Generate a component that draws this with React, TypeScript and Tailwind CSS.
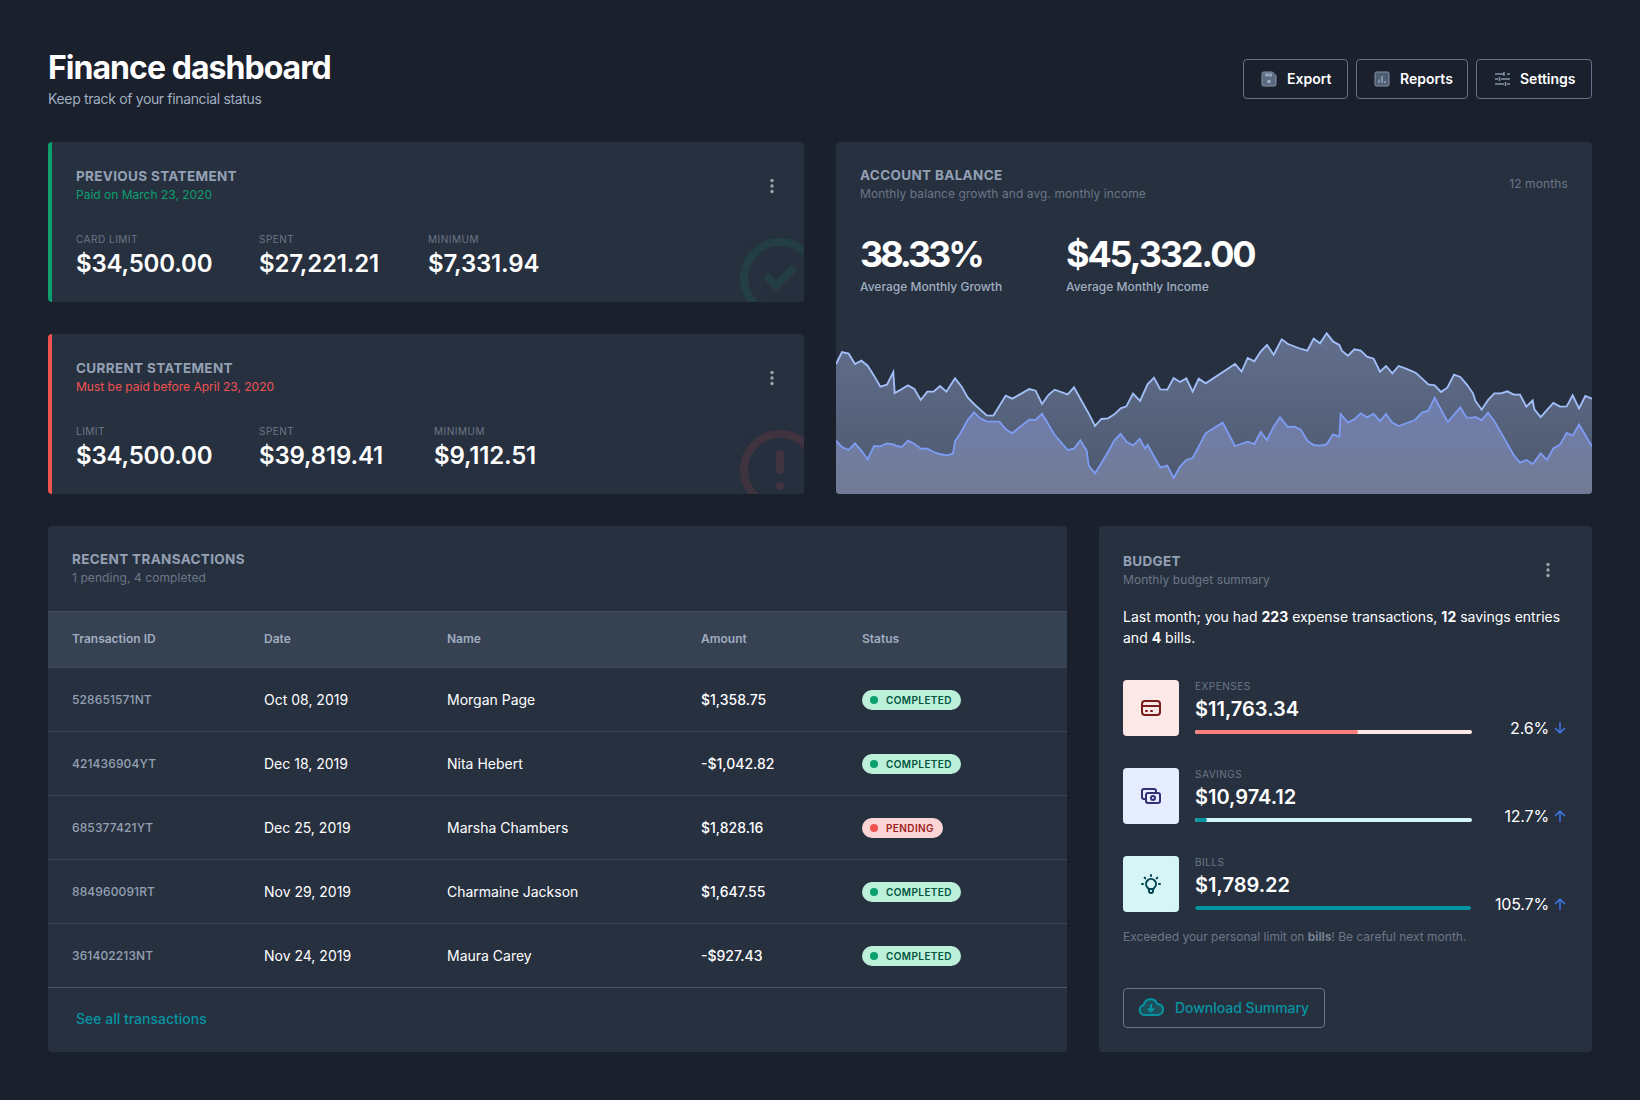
import React from 'react';

const topLine: number[][] = [
  [18,132],[36,96],[56,101],[75,132],[94,122],[113,137],[132,167],[151,200],[171,194],[190,156],[194,219],[214,208],[234,196],[253,207],[272,240],[292,215],[311,215],[330,198],[349,215],[375,175],[395,200],[413,232],[432,252],[470,286],[490,287],[527,227],[547,236],[598,207],[617,212],[636,252],[655,225],[674,209],[713,223],[732,202],[770,270],[776,280],[795,318],[814,297],[834,295],[853,283],[872,265],[889,259],[909,221],[930,243],[953,192],[972,173],[991,208],[1012,209],[1031,174],[1050,186],[1069,175],[1088,215],[1106,176],[1127,190],[1198,143],
  [1215,132],[1235,155],[1253,114],[1273,124],[1292,95],[1311,75],[1331,104],[1355,58],[1374,72],[1413,87],[1432,92],[1451,56],[1470,70],[1490,40],[1510,65],[1528,75],[1536,93],[1554,107],[1573,88],[1592,92],[1611,110],[1631,116],[1650,155],[1668,138],[1687,160],[1706,138],[1726,145],[1757,158],[1795,193],[1814,196],[1833,216],[1852,203],[1872,164],[1891,171],[1910,193],[1929,220],[1936,242],[1955,269],[1974,240],[1993,220],[2013,220],[2032,214],[2051,224],[2070,224],[2089,260],[2108,241],[2113,268],[2132,291],[2170,249],[2190,260],[2210,259],[2228,226],[2247,265],[2266,228],[2286,236],
];

const bottomLine: number[][] = [
  [18,362],[37,382],[56,390],[75,370],[94,392],[113,418],[132,378],[151,379],[170,370],[190,373],[200,378],[216,381],[234,362],[253,371],[272,386],[292,386],[311,396],[330,402],[350,406],[369,401],[375,364],[392,338],[413,300],[432,277],[451,295],[470,304],[508,305],[527,327],[546,340],[597,299],[617,300],[636,281],[655,313],[674,345],[713,390],[732,386],[751,361],[770,392],[776,437],[795,460],[814,430],[834,396],[853,361],[872,342],[891,367],[910,376],[929,356],[945,385],[953,375],[991,442],[1012,437],[1031,474],[1050,440],[1069,420],[1088,414],[1127,340],[1178,308],
  [1215,378],[1253,365],[1273,372],[1292,336],[1311,360],[1331,320],[1350,292],[1374,321],[1394,320],[1413,330],[1432,362],[1451,375],[1470,377],[1490,373],[1509,343],[1528,350],[1532,282],[1554,308],[1573,298],[1592,280],[1611,292],[1631,282],[1650,303],[1668,282],[1687,308],[1706,318],[1755,300],[1776,278],[1795,272],[1814,233],[1853,306],[1891,262],[1910,293],[1929,293],[1936,291],[1955,300],[1974,278],[1993,303],[2013,338],[2051,405],[2070,428],[2089,420],[2108,432],[2132,400],[2151,420],[2170,385],[2190,374],[2210,339],[2228,347],[2247,314],[2266,345],[2286,380],
];

const toPoints = (line: number[][]) => line.map((p) => p.join(',')).join(' ');
const toArea = (line: number[][]) => `18,522 ${toPoints(line)} 2286,522`;

const transactions = [
  { id: '528651571NT', date: 'Oct 08, 2019', name: 'Morgan Page', amount: '$1,358.75', status: 'COMPLETED' },
  { id: '421436904YT', date: 'Dec 18, 2019', name: 'Nita Hebert', amount: '-$1,042.82', status: 'COMPLETED' },
  { id: '685377421YT', date: 'Dec 25, 2019', name: 'Marsha Chambers', amount: '$1,828.16', status: 'PENDING' },
  { id: '884960091RT', date: 'Nov 29, 2019', name: 'Charmaine Jackson', amount: '$1,647.55', status: 'COMPLETED' },
  { id: '361402213NT', date: 'Nov 24, 2019', name: 'Maura Carey', amount: '-$927.43', status: 'COMPLETED' },
];

const Dots = () => (
  <svg className="w-5 h-5 text-[#9ca3af]" viewBox="0 0 20 20" fill="currentColor">
    <circle cx="10" cy="4.5" r="1.7" />
    <circle cx="10" cy="10" r="1.7" />
    <circle cx="10" cy="15.5" r="1.7" />
  </svg>
);

const HeaderButton = ({ icon, label, className }: { icon: React.ReactNode; label: string; className: string }) => (
  <button className={`h-10 flex items-center border border-[#64748b] rounded text-sm font-semibold text-white ${className}`}>
    {icon}
    {label}
  </button>
);

const Stat = ({ label, value, className }: { label: string; value: string; className: string }) => (
  <div className={className}>
    <div className="text-[10px] leading-[14px] tracking-[0.05em] text-[#6b7688]">{label}</div>
    <div className="text-2xl leading-8 mt-[2px] font-semibold tracking-[-0.008em] text-white">{value}</div>
  </div>
);

const StatementCard = ({
  title,
  note,
  noteColor,
  border,
  ghost,
  children,
}: {
  title: string;
  note: string;
  noteColor: string;
  border: string;
  ghost: React.ReactNode;
  children: React.ReactNode;
}) => (
  <div className={`relative h-40 overflow-hidden rounded bg-[#27303f] border-l-4 ${border} pl-6 pt-[25px]`}>
    <div className="text-[13.5px] leading-[18px] font-bold tracking-wide text-[#94a0b4]">{title}</div>
    <div className={`text-xs leading-4 mt-[2px] ${noteColor}`}>{note}</div>
    <div className="absolute top-[34px] right-[22px]">
      <Dots />
    </div>
    <div className="flex mt-[29px]">{children}</div>
    {ghost}
  </div>
);

const BudgetRow = ({
  label,
  value,
  percent,
  up,
  tileBg,
  icon,
  track,
  fill,
  fillWidth,
}: {
  label: string;
  value: string;
  percent: string;
  up: boolean;
  tileBg: string;
  icon: React.ReactNode;
  track: string;
  fill: string;
  fillWidth: number;
}) => (
  <div className="flex items-start h-14">
    <div className={`w-14 h-14 rounded flex items-center justify-center ${tileBg}`}>{icon}</div>
    <div className="ml-4 mt-[-1px] w-[277px]">
      <div className="text-[10px] leading-[14px] tracking-[0.05em] text-[#6b7688]">{label}</div>
      <div className="text-xl leading-7 font-semibold text-white mt-[2px]">{value}</div>
      <div className={`h-1 rounded-sm mt-[7px] overflow-hidden ${track}`}>
        <div className={`h-full rounded-sm ${fill}`} style={{ width: `${fillWidth}%` }} />
      </div>
    </div>
    <div className="ml-auto flex items-center h-6 mt-[36px] text-base tracking-[-0.01em] text-white">
      {percent}
      <svg className="w-3.5 h-3.5 ml-1 text-[#3b76e1]" viewBox="0 0 14 14" fill="none" stroke="currentColor" strokeWidth="1.5" strokeLinecap="round" strokeLinejoin="round">
        {up ? <path d="M7 12.5V2M2.5 6.5L7 2l4.5 4.5" /> : <path d="M7 1.5V12M2.5 7.5L7 12l4.5-4.5" />}
      </svg>
    </div>
  </div>
);

export default function App() {
  return (
    <div className="min-h-[1100px] bg-[#1a202c] px-12 pt-12 pb-12 font-['Inter',sans-serif] text-white">
      {/* Заголовок */}
      <div className="flex justify-between h-[94px]">
        <div>
          <h1 className="text-[32px] leading-[40px] font-bold tracking-[-0.03em] text-white">Finance dashboard</h1>
          <p className="text-sm leading-5 mt-[1px] tracking-[-0.025em] text-[#a0aec0]">Keep track of your financial status</p>
        </div>
        <div className="flex gap-2 mt-[11px]">
          <HeaderButton
            className="w-[105px] pl-[17px] gap-[10px]"
            label="Export"
            icon={
              <svg className="w-4 h-4" viewBox="0 0 16 16">
                <path d="M2.500 1h9L15 4.500v9a1.500 1.500 0 01-1.500 1.500h-11A1.500 1.500 0 011 13.500v-11A1.500 1.500 0 012.500 1z" fill="#5b6a80" stroke="#8492a6" strokeWidth="1" />
                <path d="M4 2.500h7V5.500H4z" fill="#94a3b8" />
                <circle cx="8" cy="10.500" r="1.800" fill="#a0aec0" />
              </svg>
            }
          />
          <HeaderButton
            className="w-[112px] pl-[17px] gap-[10px]"
            label="Reports"
            icon={
              <svg className="w-4 h-4" viewBox="0 0 16 16">
                <rect x="1" y="1" width="14" height="14" rx="1.500" fill="#4f5d73" stroke="#8492a6" strokeWidth="1" />
                <path d="M5 12V8.500M8 12V5M11 12v-2" stroke="#a0aec0" strokeWidth="1.300" />
              </svg>
            }
          />
          <HeaderButton
            className="w-[116px] pl-[17px] gap-[9px]"
            label="Settings"
            icon={
              <svg className="w-[17px] h-4" viewBox="0 0 17 16" fill="none" stroke="#8492a6" strokeWidth="1.500">
                <path d="M1 3h9M13 3h3M1 8h3M7 8h9M1 13h9M13 13h3M10 1v4M5.500 6v4M11.500 11v4" />
              </svg>
            }
          />
        </div>
      </div>

      {/* Верхний ряд */}
      <div className="grid grid-cols-2 gap-8">
        <div className="flex flex-col gap-8">
          <StatementCard
            title="PREVIOUS STATEMENT"
            note="Paid on March 23, 2020"
            noteColor="text-[#0e9f6e]"
            border="border-[#0e9f6e]"
            ghost={
              <svg className="absolute w-24 h-24 right-[-24px] bottom-[-24px] text-[#0e9f6e] opacity-[0.13]" viewBox="0 0 24 24" fill="none" stroke="currentColor" strokeWidth="2" strokeLinecap="round" strokeLinejoin="round">
                <path d="M9 12l2 2 4-4m6 2a9 9 0 11-18 0 9 9 0 0118 0z" />
              </svg>
            }
          >
            <Stat className="w-[183px]" label="CARD LIMIT" value="$34,500.00" />
            <Stat className="w-[169px]" label="SPENT" value="$27,221.21" />
            <Stat className="w-[168px]" label="MINIMUM" value="$7,331.94" />
          </StatementCard>
          <StatementCard
            title="CURRENT STATEMENT"
            note="Must be paid before April 23, 2020"
            noteColor="text-[#f05252]"
            border="border-[#f05252]"
            ghost={
              <svg className="absolute w-24 h-24 right-[-24px] bottom-[-24px] text-[#f05252] opacity-[0.13]" viewBox="0 0 24 24" fill="none" stroke="currentColor" strokeWidth="2" strokeLinecap="round" strokeLinejoin="round">
                <path d="M12 8v4m0 4h.01M21 12a9 9 0 11-18 0 9 9 0 0118 0z" />
              </svg>
            }
          >
            <Stat className="w-[183px]" label="LIMIT" value="$34,500.00" />
            <Stat className="w-[175px]" label="SPENT" value="$39,819.41" />
            <Stat className="w-[168px]" label="MINIMUM" value="$9,112.51" />
          </StatementCard>
        </div>

        <div className="relative h-[352px] overflow-hidden rounded bg-[#27303f] px-6 pt-[25px]">
          <div className="flex justify-between">
            <div>
              <div className="text-[13.5px] leading-[16px] font-bold tracking-wide text-[#94a0b4]">ACCOUNT BALANCE</div>
              <div className="text-xs leading-4 mt-[3px] tracking-[0.006em] text-[#6b7688]">Monthly balance growth and avg. monthly income</div>
            </div>
            <div className="text-xs leading-4 mt-[9px] tracking-[0.01em] text-[#6b7688]">12 months</div>
          </div>
          <div className="flex mt-[29px]">
            <div className="w-[206px]">
              <div className="text-[36px] leading-[46px] font-bold tracking-[-0.085em] text-white">38.33%</div>
              <div className="text-xs leading-4 font-medium text-[#a0aec0] mt-[2px]">Average Monthly Growth</div>
            </div>
            <div>
              <div className="text-[36px] leading-[46px] font-bold tracking-[-0.06em] text-white">$45,332.00</div>
              <div className="text-xs leading-4 font-medium text-[#a0aec0] mt-[2px]">Average Monthly Income</div>
            </div>
          </div>
          <svg className="absolute left-0 bottom-0 w-[756px] h-[174px]" viewBox="18 0 2268 522">
            <defs>
              <linearGradient id="balanceFill" x1="0" y1="40" x2="0" y2="450" gradientUnits="userSpaceOnUse">
                <stop offset="0" stopColor="#626f8d" />
                <stop offset="1" stopColor="#4f5b71" />
              </linearGradient>
              <linearGradient id="incomeFill" x1="0" y1="240" x2="0" y2="522" gradientUnits="userSpaceOnUse">
                <stop offset="0" stopColor="#6f7eae" />
                <stop offset="1" stopColor="#727b95" />
              </linearGradient>
            </defs>
            <polygon points={toArea(topLine)} fill="url(#balanceFill)" />
            <polyline points={toPoints(topLine)} fill="none" stroke="#a3bffa" strokeWidth="5.500" />
            <polygon points={toArea(bottomLine)} fill="url(#incomeFill)" />
            <polyline points={toPoints(bottomLine)} fill="none" stroke="#7f9cf5" strokeWidth="5.500" />
          </svg>
        </div>
      </div>

      {/* Нижний ряд */}
      <div className="grid grid-cols-[1fr_493px] gap-8 mt-8">
        <div className="h-[526px] rounded bg-[#27303f] overflow-hidden">
          <div className="h-[85px] px-6 pt-[25px]">
            <div className="text-[13.5px] leading-[16px] font-bold tracking-wide text-[#94a0b4]">RECENT TRANSACTIONS</div>
            <div className="text-xs leading-4 mt-[3px] tracking-[0.006em] text-[#6b7688]">1 pending, 4 completed</div>
          </div>
          <div className="grid grid-cols-[192px_183px_254px_161px_1fr] items-center h-[56px] px-6 pb-[1px] bg-[#364152] border-t border-[#414c5e] text-xs font-semibold text-[#a0aec0]">
            <div>Transaction ID</div>
            <div>Date</div>
            <div>Name</div>
            <div>Amount</div>
            <div>Status</div>
          </div>
          {transactions.map((tx) => (
            <div key={tx.id} className="grid grid-cols-[192px_183px_254px_161px_1fr] items-center h-16 px-6 border-t border-[#3e4859] text-sm text-white">
              <div className="text-xs font-medium tracking-[0.01em] text-[#94a0b4]">{tx.id}</div>
              <div>{tx.date}</div>
              <div>{tx.name}</div>
              <div className="font-medium">{tx.amount}</div>
              <div>
                {tx.status === 'COMPLETED' ? (
                  <span className="inline-flex items-center h-5 pl-2 pr-[9px] rounded-full bg-[#bcf0da] text-[10px] font-semibold tracking-[0.04em] text-[#03543f]">
                    <span className="w-2 h-2 rounded-full bg-[#0e9f6e] mr-[8px]" />
                    COMPLETED
                  </span>
                ) : (
                  <span className="inline-flex items-center h-5 pl-2 pr-[9px] rounded-full bg-[#fbd5d5] text-[10px] font-semibold tracking-[0.04em] text-[#9b1c1c]">
                    <span className="w-2 h-2 rounded-full bg-[#f05252] mr-[8px]" />
                    PENDING
                  </span>
                )}
              </div>
            </div>
          ))}
          <div className="h-16 flex items-center pl-7 pb-[1px] border-t border-[#4b5567] text-sm font-medium text-[#0694a2]">See all transactions</div>
        </div>

        <div className="relative h-[526px] rounded bg-[#27303f] px-6 pt-[27px]">
          <div className="text-[13.5px] leading-[16px] font-bold tracking-wide text-[#94a0b4]">BUDGET</div>
          <div className="text-xs leading-4 mt-[3px] tracking-[0.006em] text-[#6b7688]">Monthly budget summary</div>
          <div className="absolute top-[34px] right-[34px]">
            <Dots />
          </div>
          <p className="text-sm leading-[21px] mt-[18px] text-white">
            Last month; you had <b>223</b> expense transactions, <b>12</b> savings entries and <b>4</b> bills.
          </p>
          <div className="flex flex-col gap-8 mt-[32px] pr-[1px]">
            <BudgetRow
              label="EXPENSES"
              value="$11,763.34"
              percent="2.6%"
              up={false}
              tileBg="bg-[#fde8e8]"
              track="bg-[#fde8e8]"
              fill="bg-[#f98080]"
              fillWidth={59}
              icon={
                <svg className="w-6 h-6 text-[#771d1d]" viewBox="0 0 24 24" fill="none" stroke="currentColor" strokeWidth="2" strokeLinecap="round" strokeLinejoin="round">
                  <path d="M3 10h18M7 15h1m4 0h1m-7 4h12a3 3 0 003-3V8a3 3 0 00-3-3H6a3 3 0 00-3 3v8a3 3 0 003 3z" />
                </svg>
              }
            />
            <BudgetRow
              label="SAVINGS"
              value="$10,974.12"
              percent="12.7%"
              up
              tileBg="bg-[#e5edff]"
              track="bg-[#d5f5f6]"
              fill="bg-[#0694a2]"
              fillWidth={4.3}
              icon={
                <svg className="w-6 h-6 text-[#362f78]" viewBox="0 0 24 24" fill="none" stroke="currentColor" strokeWidth="2" strokeLinecap="round" strokeLinejoin="round">
                  <path d="M17 9V7a2 2 0 00-2-2H5a2 2 0 00-2 2v6a2 2 0 002 2h2m2 4h10a2 2 0 002-2v-6a2 2 0 00-2-2H9a2 2 0 00-2 2v6a2 2 0 002 2zm7-5a2 2 0 11-4 0 2 2 0 014 0z" />
                </svg>
              }
            />
            <BudgetRow
              label="BILLS"
              value="$1,789.22"
              percent="105.7%"
              up
              tileBg="bg-[#d5f5f6]"
              track="bg-transparent"
              fill="bg-[#0694a2]"
              fillWidth={99.6}
              icon={
                <svg className="w-6 h-6 text-[#014451]" viewBox="0 0 24 24" fill="none" stroke="currentColor" strokeWidth="2" strokeLinecap="round" strokeLinejoin="round">
                  <path d="M9.663 17h4.673M12 3v1m6.364 1.636l-.707.707M21 12h-1M4 12H3m3.343-5.657l-.707-.707m2.828 9.900a5 5 0 117.072 0l-.548.547A3.374 3.374 0 0014 18.469V19a2 2 0 11-4 0v-.531c0-.895-.356-1.754-.988-2.386l-.548-.547z" />
                </svg>
              }
            />
          </div>
          <p className="text-xs leading-4 mt-[17px] text-[#6b7688]">
            Exceeded your personal limit on <b className="font-semibold text-[#7c8698]">bills</b>! Be careful next month.
          </p>
          <button className="flex items-center w-[202px] h-10 mt-[43px] pl-[14px] border border-[#64748b] rounded text-sm font-medium tracking-[-0.003em] text-[#0694a2]">
            <svg className="w-[26px] h-[26px] mr-[11px]" viewBox="0 0 26 26">
              <path d="M6.500 20a5 5 0 01-.8-9.900 7 7 0 0113.500-1.200 5.500 5.500 0 01.6 11.100z" fill="#1f4e5c" stroke="#0694a2" strokeWidth="2" strokeLinejoin="round" />
              <path d="M13 10v6.500M10.500 14l2.500 2.500 2.500-2.500" fill="none" stroke="#0694a2" strokeWidth="2" strokeLinecap="round" strokeLinejoin="round" />
            </svg>
            Download Summary
          </button>
        </div>
      </div>
    </div>
  );
}
